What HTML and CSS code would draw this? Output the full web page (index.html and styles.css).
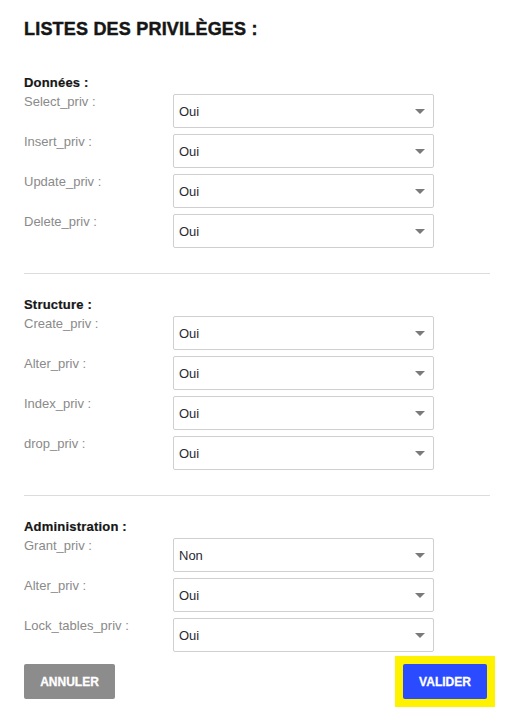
FILE: index.html
```html
<!DOCTYPE html>
<html lang="fr">
<head>
<meta charset="utf-8">
<title>Listes des privilèges</title>
<link rel="stylesheet" href="styles.css">
</head>
<body>
<main class="page">
  <h1 class="title">LISTES DES PRIVILÈGES :</h1>

  <section class="group">
    <h2 class="group-title">Données :</h2>
    <div class="rows">
      <div class="row"><label class="lbl">Select_priv :</label><div class="sel"><select><option>Oui</option><option>Non</option></select><svg class="arrow" viewBox="0 0 10 5" width="10" height="5"><path d="M0 0H10L5 5Z"/></svg></div></div>
      <div class="row"><label class="lbl">Insert_priv :</label><div class="sel"><select><option>Oui</option><option>Non</option></select><svg class="arrow" viewBox="0 0 10 5" width="10" height="5"><path d="M0 0H10L5 5Z"/></svg></div></div>
      <div class="row"><label class="lbl">Update_priv :</label><div class="sel"><select><option>Oui</option><option>Non</option></select><svg class="arrow" viewBox="0 0 10 5" width="10" height="5"><path d="M0 0H10L5 5Z"/></svg></div></div>
      <div class="row"><label class="lbl">Delete_priv :</label><div class="sel"><select><option>Oui</option><option>Non</option></select><svg class="arrow" viewBox="0 0 10 5" width="10" height="5"><path d="M0 0H10L5 5Z"/></svg></div></div>
    </div>
  </section>

  <hr class="divider">

  <section class="group">
    <h2 class="group-title">Structure :</h2>
    <div class="rows">
      <div class="row"><label class="lbl">Create_priv :</label><div class="sel"><select><option>Oui</option><option>Non</option></select><svg class="arrow" viewBox="0 0 10 5" width="10" height="5"><path d="M0 0H10L5 5Z"/></svg></div></div>
      <div class="row"><label class="lbl">Alter_priv :</label><div class="sel"><select><option>Oui</option><option>Non</option></select><svg class="arrow" viewBox="0 0 10 5" width="10" height="5"><path d="M0 0H10L5 5Z"/></svg></div></div>
      <div class="row"><label class="lbl">Index_priv :</label><div class="sel"><select><option>Oui</option><option>Non</option></select><svg class="arrow" viewBox="0 0 10 5" width="10" height="5"><path d="M0 0H10L5 5Z"/></svg></div></div>
      <div class="row"><label class="lbl">drop_priv :</label><div class="sel"><select><option>Oui</option><option>Non</option></select><svg class="arrow" viewBox="0 0 10 5" width="10" height="5"><path d="M0 0H10L5 5Z"/></svg></div></div>
    </div>
  </section>

  <hr class="divider">

  <section class="group">
    <h2 class="group-title">Administration :</h2>
    <div class="rows">
      <div class="row"><label class="lbl">Grant_priv :</label><div class="sel"><select><option>Non</option><option>Oui</option></select><svg class="arrow" viewBox="0 0 10 5" width="10" height="5"><path d="M0 0H10L5 5Z"/></svg></div></div>
      <div class="row"><label class="lbl">Alter_priv :</label><div class="sel"><select><option>Oui</option><option>Non</option></select><svg class="arrow" viewBox="0 0 10 5" width="10" height="5"><path d="M0 0H10L5 5Z"/></svg></div></div>
      <div class="row"><label class="lbl">Lock_tables_priv :</label><div class="sel"><select><option>Oui</option><option>Non</option></select><svg class="arrow" viewBox="0 0 10 5" width="10" height="5"><path d="M0 0H10L5 5Z"/></svg></div></div>
    </div>
  </section>

  <div class="actions">
    <button class="btn btn-cancel" type="button">ANNULER</button>
    <span class="focus-ring"><button class="btn btn-ok" type="button">VALIDER</button></span>
  </div>
</main>
</body>
</html>
```
FILE: styles.css
```css
* { box-sizing: border-box; }
html, body { margin: 0; padding: 0; background: #fff; }
body {
  font-family: "Liberation Sans", Arial, sans-serif;
  color: #222;
}
.page {
  width: 466px;
  margin-left: 24px;
  padding-top: 19px;
}
.title {
  margin: 0;
  font-size: 18px;
  line-height: 20px;
  font-weight: 700;
  letter-spacing: 0.2px;
  color: #161616;
  -webkit-text-stroke: 0.45px #161616;
}
.group { margin: 0; }
.page .title + .group { margin-top: 36px; }
.group-title {
  margin: 0 0 3px 0;
  font-size: 13px;
  line-height: 16px;
  font-weight: 700;
  letter-spacing: 0.2px;
  color: #161616;
  -webkit-text-stroke: 0.2px #161616;
}
.rows {
  display: flex;
  flex-direction: column;
  gap: 6px;
}
.row {
  display: grid;
  grid-template-columns: 149px 261px;
  align-items: start;
}
.lbl {
  font-size: 13px;
  line-height: 16px;
  color: #8a8a8a;
}
.sel {
  position: relative;
  height: 34px;
}
.sel select {
  appearance: none;
  -webkit-appearance: none;
  width: 100%;
  height: 34px;
  margin: 0;
  padding: 0 24px 0 5px;
  border: 1px solid #cfcfcf;
  border-radius: 2px;
  background: #fff;
  font-family: "Liberation Sans", Arial, sans-serif;
  font-size: 13px;
  color: #2a2a33;
  outline: none;
}
.arrow {
  position: absolute;
  right: 9px;
  top: 15px;
  fill: #7a7a7a;
  pointer-events: none;
}
.divider {
  margin: 25px 0 23px 0;
  border: 0;
  border-top: 1px solid #dcdcdc;
  height: 0;
}
.actions {
  display: flex;
  justify-content: space-between;
  align-items: flex-start;
  margin-top: 12px;
  padding-right: 3px;
}
.btn {
  display: block;
  height: 35px;
  border: 0;
  border-radius: 2px;
  font-family: "Liberation Sans", Arial, sans-serif;
  font-size: 12px;
  font-weight: 700;
  color: #fff;
  padding: 0;
  -webkit-text-stroke: 0.3px #fff;
}
.btn-cancel {
  width: 91px;
  background: #8c8c8c;
}
.focus-ring {
  display: block;
  padding: 8px;
  margin: -8px -8px 0 0;
  background: #fff200;
}
.btn-ok {
  width: 84px;
  background: #2a4bff;
}
```
